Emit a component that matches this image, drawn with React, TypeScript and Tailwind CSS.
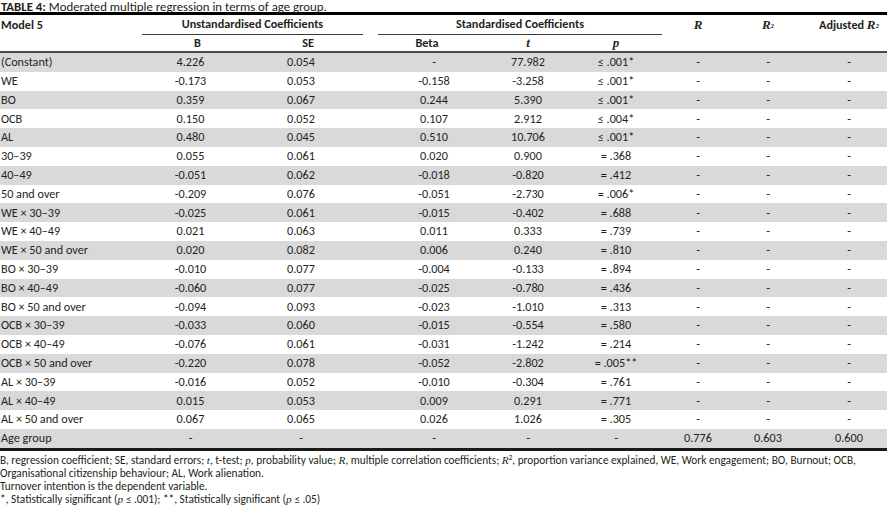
import React from "react";

const rows: [string, string, string, string, string, string, string, string, string][] = [
  ["(Constant)", "4.226", "0.054", "-", "77.982", "≤ .001*", "-", "-", "-"],
  ["WE", "-0.173", "0.053", "-0.158", "-3.258", "≤ .001*", "-", "-", "-"],
  ["BO", "0.359", "0.067", "0.244", "5.390", "≤ .001*", "-", "-", "-"],
  ["OCB", "0.150", "0.052", "0.107", "2.912", "≤ .004*", "-", "-", "-"],
  ["AL", "0.480", "0.045", "0.510", "10.706", "≤ .001*", "-", "-", "-"],
  ["30–39", "0.055", "0.061", "0.020", "0.900", "= .368", "-", "-", "-"],
  ["40–49", "-0.051", "0.062", "-0.018", "-0.820", "= .412", "-", "-", "-"],
  ["50 and over", "-0.209", "0.076", "-0.051", "-2.730", "= .006*", "-", "-", "-"],
  ["WE × 30–39", "-0.025", "0.061", "-0.015", "-0.402", "= .688", "-", "-", "-"],
  ["WE × 40–49", "0.021", "0.063", "0.011", "0.333", "= .739", "-", "-", "-"],
  ["WE × 50 and over", "0.020", "0.082", "0.006", "0.240", "= .810", "-", "-", "-"],
  ["BO × 30–39", "-0.010", "0.077", "-0.004", "-0.133", "= .894", "-", "-", "-"],
  ["BO × 40–49", "-0.060", "0.077", "-0.025", "-0.780", "= .436", "-", "-", "-"],
  ["BO × 50 and over", "-0.094", "0.093", "-0.023", "-1.010", "= .313", "-", "-", "-"],
  ["OCB × 30–39", "-0.033", "0.060", "-0.015", "-0.554", "= .580", "-", "-", "-"],
  ["OCB × 40–49", "-0.076", "0.061", "-0.031", "-1.242", "= .214", "-", "-", "-"],
  ["OCB × 50 and over", "-0.220", "0.078", "-0.052", "-2.802", "= .005**", "-", "-", "-"],
  ["AL × 30–39", "-0.016", "0.052", "-0.010", "-0.304", "= .761", "-", "-", "-"],
  ["AL × 40–49", "0.015", "0.053", "0.009", "0.291", "= .771", "-", "-", "-"],
  ["AL × 50 and over", "0.067", "0.065", "0.026", "1.026", "= .305", "-", "-", "-"],
  ["Age group", "-", "-", "-", "-", "-", "0.776", "0.603", "0.600"],
];

const grid = "grid grid-cols-[142px_111px_110px_123px_84px_92px_72px_68px_85px]";
const serif = "font-['Liberation_Serif',serif] italic";

export default function App() {
  return (
    <div className="w-[887px] h-[505px] overflow-hidden bg-white text-[#231f20] font-['Carlito','Lato',sans-serif] text-[12.2px]">
      <div className="h-[12px] pl-[1px] text-[12.8px] leading-[14px] whitespace-nowrap">
        <span className="font-bold">TABLE 4:</span> Moderated multiple regression in terms of age group.
      </div>
      <div className="border-t-[3px] border-black">
        {/* header */}
        <div className="border-b-2 border-[#4a4a4a] font-bold">
          <div className={`${grid} h-[18px]`}>
            <div className="pl-[1px] flex items-center">Model 5</div>
            <div className="col-span-2 flex items-center justify-center border-b border-[#3a3a3a]">
              Unstandardised Coefficients
            </div>
            <div className="col-span-3 pl-[15px]">
              <div className="h-full flex items-center justify-center border-b border-[#3a3a3a]">
                Standardised Coefficients
              </div>
            </div>
            <div className="flex items-center justify-center">
              <span className={`${serif} text-[13px]`}>R</span>
            </div>
            <div className="flex items-center justify-center">
              <span className={`${serif} text-[13px]`}>
                R<sup className="text-[7px] relative -top-[1px]">2</sup>
              </span>
            </div>
            <div className="flex items-center justify-center pl-[9px]">
              Adjusted&nbsp;
              <span className={`${serif} text-[13px]`}>
                R<sup className="text-[7px] relative -top-[1px]">2</sup>
              </span>
            </div>
          </div>
          <div className={`${grid} h-[18px] items-center`}>
            <div />
            <div className="text-center">B</div>
            <div className="text-center">SE</div>
            <div className="text-center pl-[5px]">Beta</div>
            <div className="text-center">
              <span className={`${serif} text-[13px]`}>t</span>
            </div>
            <div className="text-center">
              <span className={`${serif} text-[13px]`}>p</span>
            </div>
            <div />
            <div />
            <div />
          </div>
        </div>
        {/* body */}
        <div className="border-b-[3px] border-[#1a1a1a]">
          {rows.map((r, i) => (
            <div
              key={i}
              className={`${grid} h-[18.8px] items-center whitespace-nowrap ${i % 2 === 0 ? "bg-[#d9d9d9]" : "bg-white"}`}
            >
              <div className="pl-[1px]">{r[0]}</div>
              <div className="text-center pr-[14px]">{r[1]}</div>
              <div className="text-center pr-[14px]">{r[2]}</div>
              <div className="text-center pl-[19px]">{r[3]}</div>
              <div className="text-center">{r[4]}</div>
              <div className="text-center">{r[5]}</div>
              <div className="text-center">{r[6]}</div>
              <div className="text-center">{r[7]}</div>
              <div className="text-center pl-[9px]">{r[8]}</div>
            </div>
          ))}
        </div>
      </div>
      <div className="pt-[3px] text-[11.3px] leading-[13px] whitespace-nowrap">
        <div>
          B, regression coefficient; SE, standard errors; <span className={serif}>t</span>, t-test;{" "}
          <span className={serif}>p</span>, probability value; <span className={serif}>R</span>, multiple
          correlation coefficients; <span className={serif}>R</span>
          <sup className="text-[7px]">2</sup>, proportion variance explained, WE, Work engagement; BO, Burnout;
          OCB,
        </div>
        <div>Organisational citizenship behaviour; AL, Work alienation.</div>
        <div>Turnover intention is the dependent variable.</div>
        <div>
          *, Statistically significant (<span className={serif}>p</span> ≤ .001); **, Statistically significant (
          <span className={serif}>p</span> ≤ .05)
        </div>
      </div>
    </div>
  );
}
